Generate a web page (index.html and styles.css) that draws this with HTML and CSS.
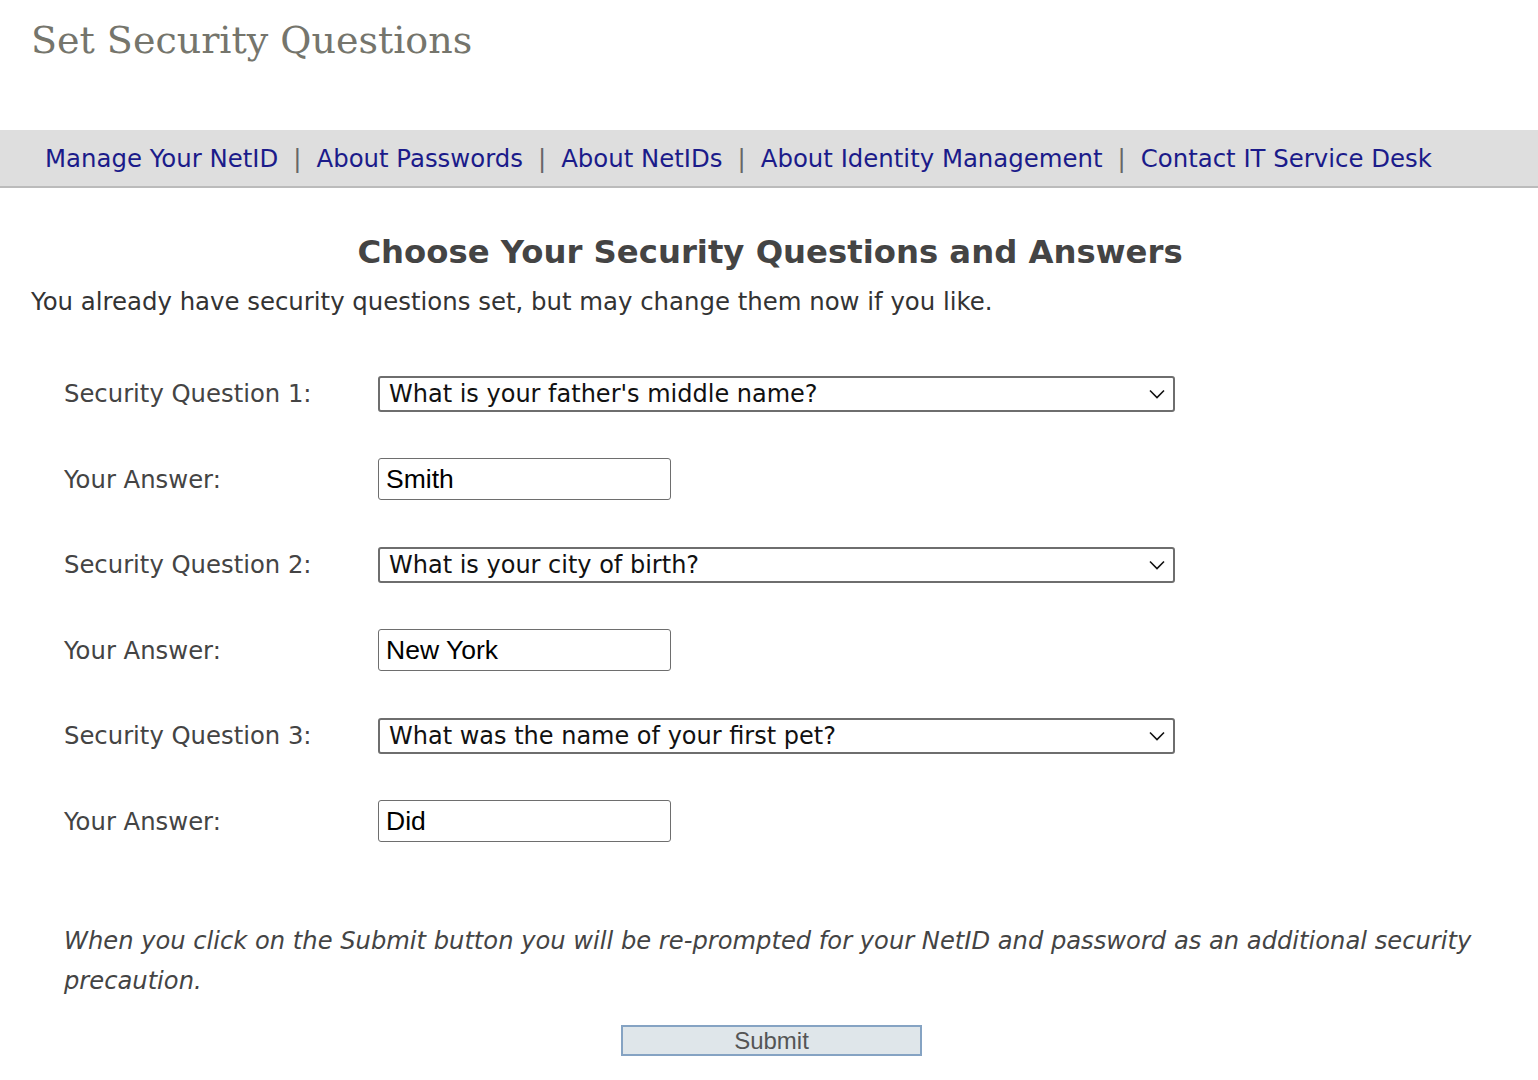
FILE: index.html
```html
<!DOCTYPE html>
<html lang="en">
<head>
<meta charset="utf-8">
<title>Set Security Questions</title>
<link rel="stylesheet" href="styles.css">
</head>
<body>
<header class="page-header">
  <h1 class="page-title">Set Security Questions</h1>
</header>
<nav class="nav-bar">
  <a class="nav-link" href="#">Manage Your NetID</a><span class="nav-sep">|</span>
  <a class="nav-link" href="#">About Passwords</a><span class="nav-sep">|</span>
  <a class="nav-link" href="#">About NetIDs</a><span class="nav-sep">|</span>
  <a class="nav-link" href="#">About Identity Management</a><span class="nav-sep">|</span>
  <a class="nav-link" href="#">Contact IT Service Desk</a>
</nav>
<main class="content">
  <h2 class="section-title">Choose Your Security Questions and Answers</h2>
  <p class="intro">You already have security questions set, but may change them now if you like.</p>
  <form class="qa-form">
    <div class="qa-grid">
      <label class="qa-label">Security Question 1:</label>
      <div class="select-box"><span class="select-text">What is your father's middle name?</span><svg class="chev" viewBox="0 0 16 10" width="16" height="10"><path d="M1 1.5 L8 8.5 L15 1.5" fill="none" stroke="#111" stroke-width="1.6"/></svg></div>
      <label class="qa-label">Your Answer:</label>
      <div class="answer-box">Smith</div>
      <label class="qa-label">Security Question 2:</label>
      <div class="select-box"><span class="select-text">What is your city of birth?</span><svg class="chev" viewBox="0 0 16 10" width="16" height="10"><path d="M1 1.5 L8 8.5 L15 1.5" fill="none" stroke="#111" stroke-width="1.6"/></svg></div>
      <label class="qa-label">Your Answer:</label>
      <div class="answer-box">New York</div>
      <label class="qa-label">Security Question 3:</label>
      <div class="select-box"><span class="select-text">What was the name of your first pet?</span><svg class="chev" viewBox="0 0 16 10" width="16" height="10"><path d="M1 1.5 L8 8.5 L15 1.5" fill="none" stroke="#111" stroke-width="1.6"/></svg></div>
      <label class="qa-label">Your Answer:</label>
      <div class="answer-box">Did</div>
    </div>
    <p class="note">When you click on the Submit button you will be re-prompted for your NetID and password as an additional security precaution.</p>
    <div class="submit-row"><button type="button" class="submit-btn">Submit</button></div>
  </form>
</main>
</body>
</html>
```
FILE: styles.css
```css
html, body {
  margin: 0;
  padding: 0;
  background: #fff;
}
body {
  font-family: "DejaVu Sans", Verdana, sans-serif;
  color: #333;
}
.page-header {
  height: 130px;
  padding-left: 31px;
}
.page-title {
  margin: 0;
  padding-top: 14px;
  font-family: "DejaVu Serif", Georgia, serif;
  font-weight: normal;
  font-size: 38px;
  line-height: 52px;
  color: #75756c;
}
.nav-bar {
  height: 56px;
  background: #dedede;
  border-bottom: 2px solid #bbb;
  display: flex;
  align-items: center;
  padding-left: 45px;
  font-size: 24.4px;
}
.nav-link {
  color: #1b1b8a;
  text-decoration: none;
}
.nav-sep {
  color: #666;
  margin: 0 15px;
}
.content {
  padding: 0 31px;
}
.section-title {
  margin: 44px 0 0;
  text-align: center;
  font-size: 32.3px;
  line-height: 40px;
  color: #444;
  padding-left: 2px;
}
.intro {
  margin: 15px 0 0;
  font-size: 24.4px;
  line-height: 30px;
  color: #333;
}
.qa-form {
  padding-left: 33px;
}
.qa-grid {
  display: grid;
  grid-template-columns: 314px 1fr;
  grid-auto-rows: 85.5px;
  align-items: center;
  margin-top: 34px;
}
.qa-label {
  font-size: 24.3px;
  color: #444;
}
.select-box {
  width: 797px;
  height: 36px;
  box-sizing: border-box;
  border: 2px solid #6e6e6e;
  border-radius: 3px;
  display: flex;
  align-items: center;
  justify-content: space-between;
  padding: 0 8px 0 9px;
  font-size: 24px;
  color: #111;
  background: #fff;
}
.chev {
  display: block;
}
.answer-box {
  width: 293px;
  height: 42px;
  box-sizing: border-box;
  border: 1px solid #6e6e6e;
  border-radius: 3px;
  display: flex;
  align-items: center;
  padding-left: 7px;
  font-family: "Liberation Sans", Arial, sans-serif;
  font-size: 26.5px;
  color: #000;
}
.note {
  margin: 57px 0 0;
  font-style: italic;
  font-size: 24.2px;
  line-height: 40px;
  color: #444;
}
.submit-row {
  display: flex;
  justify-content: center;
  margin-top: 24px;
  padding-right: 28px;
}
.submit-btn {
  width: 301px;
  height: 31px;
  box-sizing: border-box;
  border: 2px solid #85a3c3;
  background: #dfe6ea;
  font-family: "Liberation Sans", Arial, sans-serif;
  font-size: 24px;
  color: #555;
  padding: 0;
  line-height: 27px;
}
```
